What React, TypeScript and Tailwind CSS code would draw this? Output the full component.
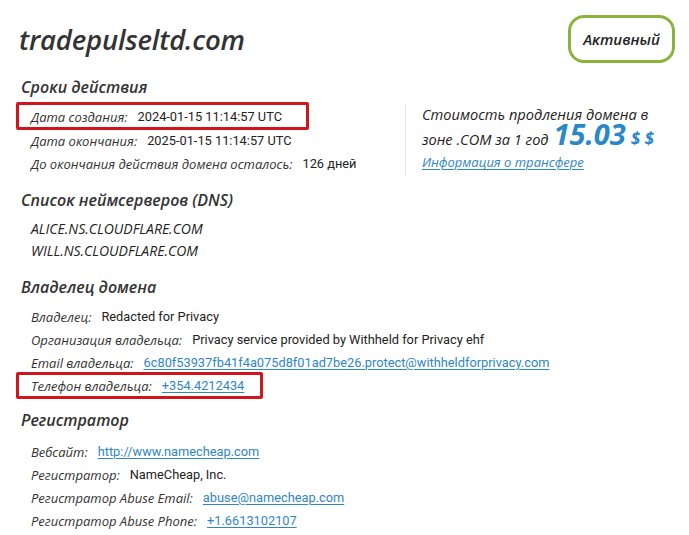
import React from "react";

const labelCls = "italic text-[#333] mr-[10px]";
const valueCls = "text-[#222] text-[12.8px] font-['Roboto',sans-serif]";
const linkCls = "text-[#2f86c4] underline decoration-1 underline-offset-2 text-[12.8px] font-['Roboto',sans-serif]";

function Row({ label, children, className = "" }: { label: string; children: React.ReactNode; className?: string }) {
  return (
    <div className={"h-[23px] flex items-center pl-[31px] " + className}>
      <span className={labelCls}>{label}</span>
      <span className={valueCls}>{children}</span>
    </div>
  );
}

function Heading({ children, className = "" }: { children: React.ReactNode; className?: string }) {
  return <div className={"pl-[21px] text-[16px] italic text-[#333] font-semibold leading-[22px] " + className}>{children}</div>;
}

export default function App() {
  return (
    <div className="w-[689px] h-[535px] bg-white overflow-hidden text-[13px] leading-[18px]" style={{ fontFamily: '"Open Sans", "Noto Sans", sans-serif' }}>
      <div className="flex justify-between items-start pt-[15px] pr-[14px]">
        <div className="pl-[19px] pt-[8px] text-[27.5px] font-semibold italic text-[#333] leading-[34px] tracking-[-0.2px]">tradepulseltd.com</div>
        <div className="w-[107px] h-[48px] rounded-[16px] border-[3px] border-[#8bb23a] flex items-center justify-center italic text-[15px] font-semibold text-[#222]">Активный</div>
      </div>

      <Heading className="mt-[13px]">Сроки действия</Heading>
      <div className="flex mt-[4px]">
        <div className="w-[389px]">
          <div className="ml-[16px] w-[293px] h-[28px] border-[3px] border-[#d3141b] rounded-[2px] flex items-center pl-[12px] pt-[2px]">
            <span className={labelCls}>Дата создания:</span>
            <span className={valueCls}>2024-01-15 11:14:57 UTC</span>
          </div>
          <Row label="Дата окончания:" className="-mt-[1px]">2025-01-15 11:14:57 UTC</Row>
          <Row label="До окончания действия домена осталось:">126 дней</Row>
        </div>
        <div className="ml-[16px] mt-[2px] border-l border-[#e6e6e6] pl-[16px] h-[72px] italic text-[#222]">
          <div className="text-[14.6px] font-medium leading-[22px] -mt-[1px]">Стоимость продления домена в</div>
          <div className="flex items-baseline text-[14.6px] font-medium leading-[22px] -mt-[2px]">
            <span>зоне .COM за 1 год</span>
            <span className="ml-[5px] text-[29px] font-bold text-[#2a88c6] leading-[22px]">15.03</span>
            <span className="ml-[5px] text-[17px] font-bold text-[#2a88c6]">$ $</span>
          </div>
          <div className="text-[13px] mt-[3px] text-[#2f86c4] underline decoration-1 underline-offset-2">Информация о трансфере</div>
        </div>
      </div>

      <Heading className="mt-[13px]">Список неймсерверов (DNS)</Heading>
      <div className="mt-[7px] pl-[31px] italic text-[#222] text-[14px]">
        <div className="h-[22px] flex items-center">ALICE.NS.CLOUDFLARE.COM</div>
        <div className="h-[22px] flex items-center">WILL.NS.CLOUDFLARE.COM</div>
      </div>

      <Heading className="mt-[14px]">Владелец домена</Heading>
      <div className="mt-[7px]">
        <Row label="Владелец:">Redacted for Privacy</Row>
        <Row label="Организация владельца:">Privacy service provided by Withheld for Privacy ehf</Row>
        <Row label="Email владельца:"><span className={linkCls}>6c80f53937fb41f4a075d8f01ad7be26.protect@withheldforprivacy.com</span></Row>
        <div className="ml-[16px] -mt-[2px] w-[247px] h-[27px] border-[3px] border-[#d3141b] rounded-[2px] flex items-center pl-[12px]">
          <span className={labelCls}>Телефон владельца:</span>
          <span className={linkCls}>+354.4212434</span>
        </div>
      </div>

      <Heading className="mt-[10px]">Регистратор</Heading>
      <div className="mt-[9px]">
        <Row label="Вебсайт:"><span className={linkCls}>http://www.namecheap.com</span></Row>
        <Row label="Регистратор:">NameCheap, Inc.</Row>
        <Row label="Регистратор Abuse Email:"><span className={linkCls}>abuse@namecheap.com</span></Row>
        <Row label="Регистратор Abuse Phone:"><span className={linkCls}>+1.6613102107</span></Row>
      </div>
    </div>
  );
}
